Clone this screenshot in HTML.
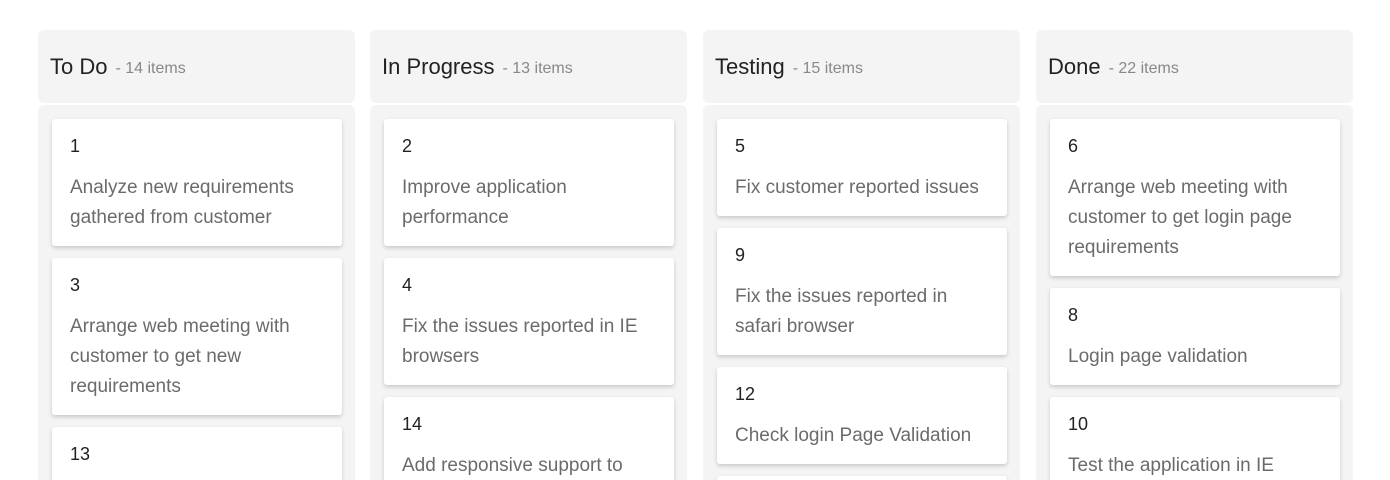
<!DOCTYPE html>
<html style="overflow:hidden;height:480px"><head><style>
body{margin:0;background:#fff;font-family:"Liberation Sans",sans-serif;width:1390px;height:480px;overflow:hidden;position:relative}
.col{position:absolute;top:30px;width:317px;height:450px;overflow:hidden}
.hd{height:73px;background:#f4f4f4;border-radius:6px;box-sizing:border-box;padding-left:12px;line-height:73px;white-space:nowrap}
.hd b{font-weight:normal;font-size:22px;color:#222}
.hd span{font-size:16px;color:#888;margin-left:8px;position:relative;top:-1px}
.body{margin-top:2px;background:#f4f4f4;border-radius:6px 6px 0 0;height:400px;padding:14px 13px 0 14px;box-sizing:border-box}
.card{background:#fff;border-radius:3px;box-shadow:0 2px 4px rgba(0,0,0,.18);padding:14px 18px 15px;margin-bottom:12px}
.n{font-size:18px;line-height:26px;color:#222;margin-bottom:12px}
.t{font-size:19px;line-height:30px;color:#6b6b6b;position:relative;top:2px}
</style></head><body>
<div class="col" style="left:38px"><div class="hd"><b>To Do</b><span>- 14 items</span></div><div class="body">
<div class="card"><div class="n">1</div><div class="t">Analyze new requirements<br>gathered from customer</div></div>
<div class="card"><div class="n">3</div><div class="t">Arrange web meeting with<br>customer to get new<br>requirements</div></div>
<div class="card"><div class="n">13</div><div class="t">Add responsive support</div></div>
</div></div>
<div class="col" style="left:370px"><div class="hd"><b>In Progress</b><span>- 13 items</span></div><div class="body">
<div class="card"><div class="n">2</div><div class="t">Improve application<br>performance</div></div>
<div class="card"><div class="n">4</div><div class="t">Fix the issues reported in IE<br>browsers</div></div>
<div class="card"><div class="n">14</div><div class="t">Add responsive support to<br>application</div></div>
</div></div>
<div class="col" style="left:703px"><div class="hd"><b>Testing</b><span>- 15 items</span></div><div class="body">
<div class="card"><div class="n">5</div><div class="t">Fix customer reported issues</div></div>
<div class="card"><div class="n">9</div><div class="t">Fix the issues reported in<br>safari browser</div></div>
<div class="card"><div class="n">12</div><div class="t">Check login Page Validation</div></div>
<div class="card"><div class="n">15</div><div class="t">Test</div></div>
</div></div>
<div class="col" style="left:1036px"><div class="hd"><b>Done</b><span>- 22 items</span></div><div class="body">
<div class="card"><div class="n">6</div><div class="t">Arrange web meeting with<br>customer to get login page<br>requirements</div></div>
<div class="card"><div class="n">8</div><div class="t">Login page validation</div></div>
<div class="card"><div class="n">10</div><div class="t">Test the application in IE<br>browser</div></div>
</div></div>
</body></html>
